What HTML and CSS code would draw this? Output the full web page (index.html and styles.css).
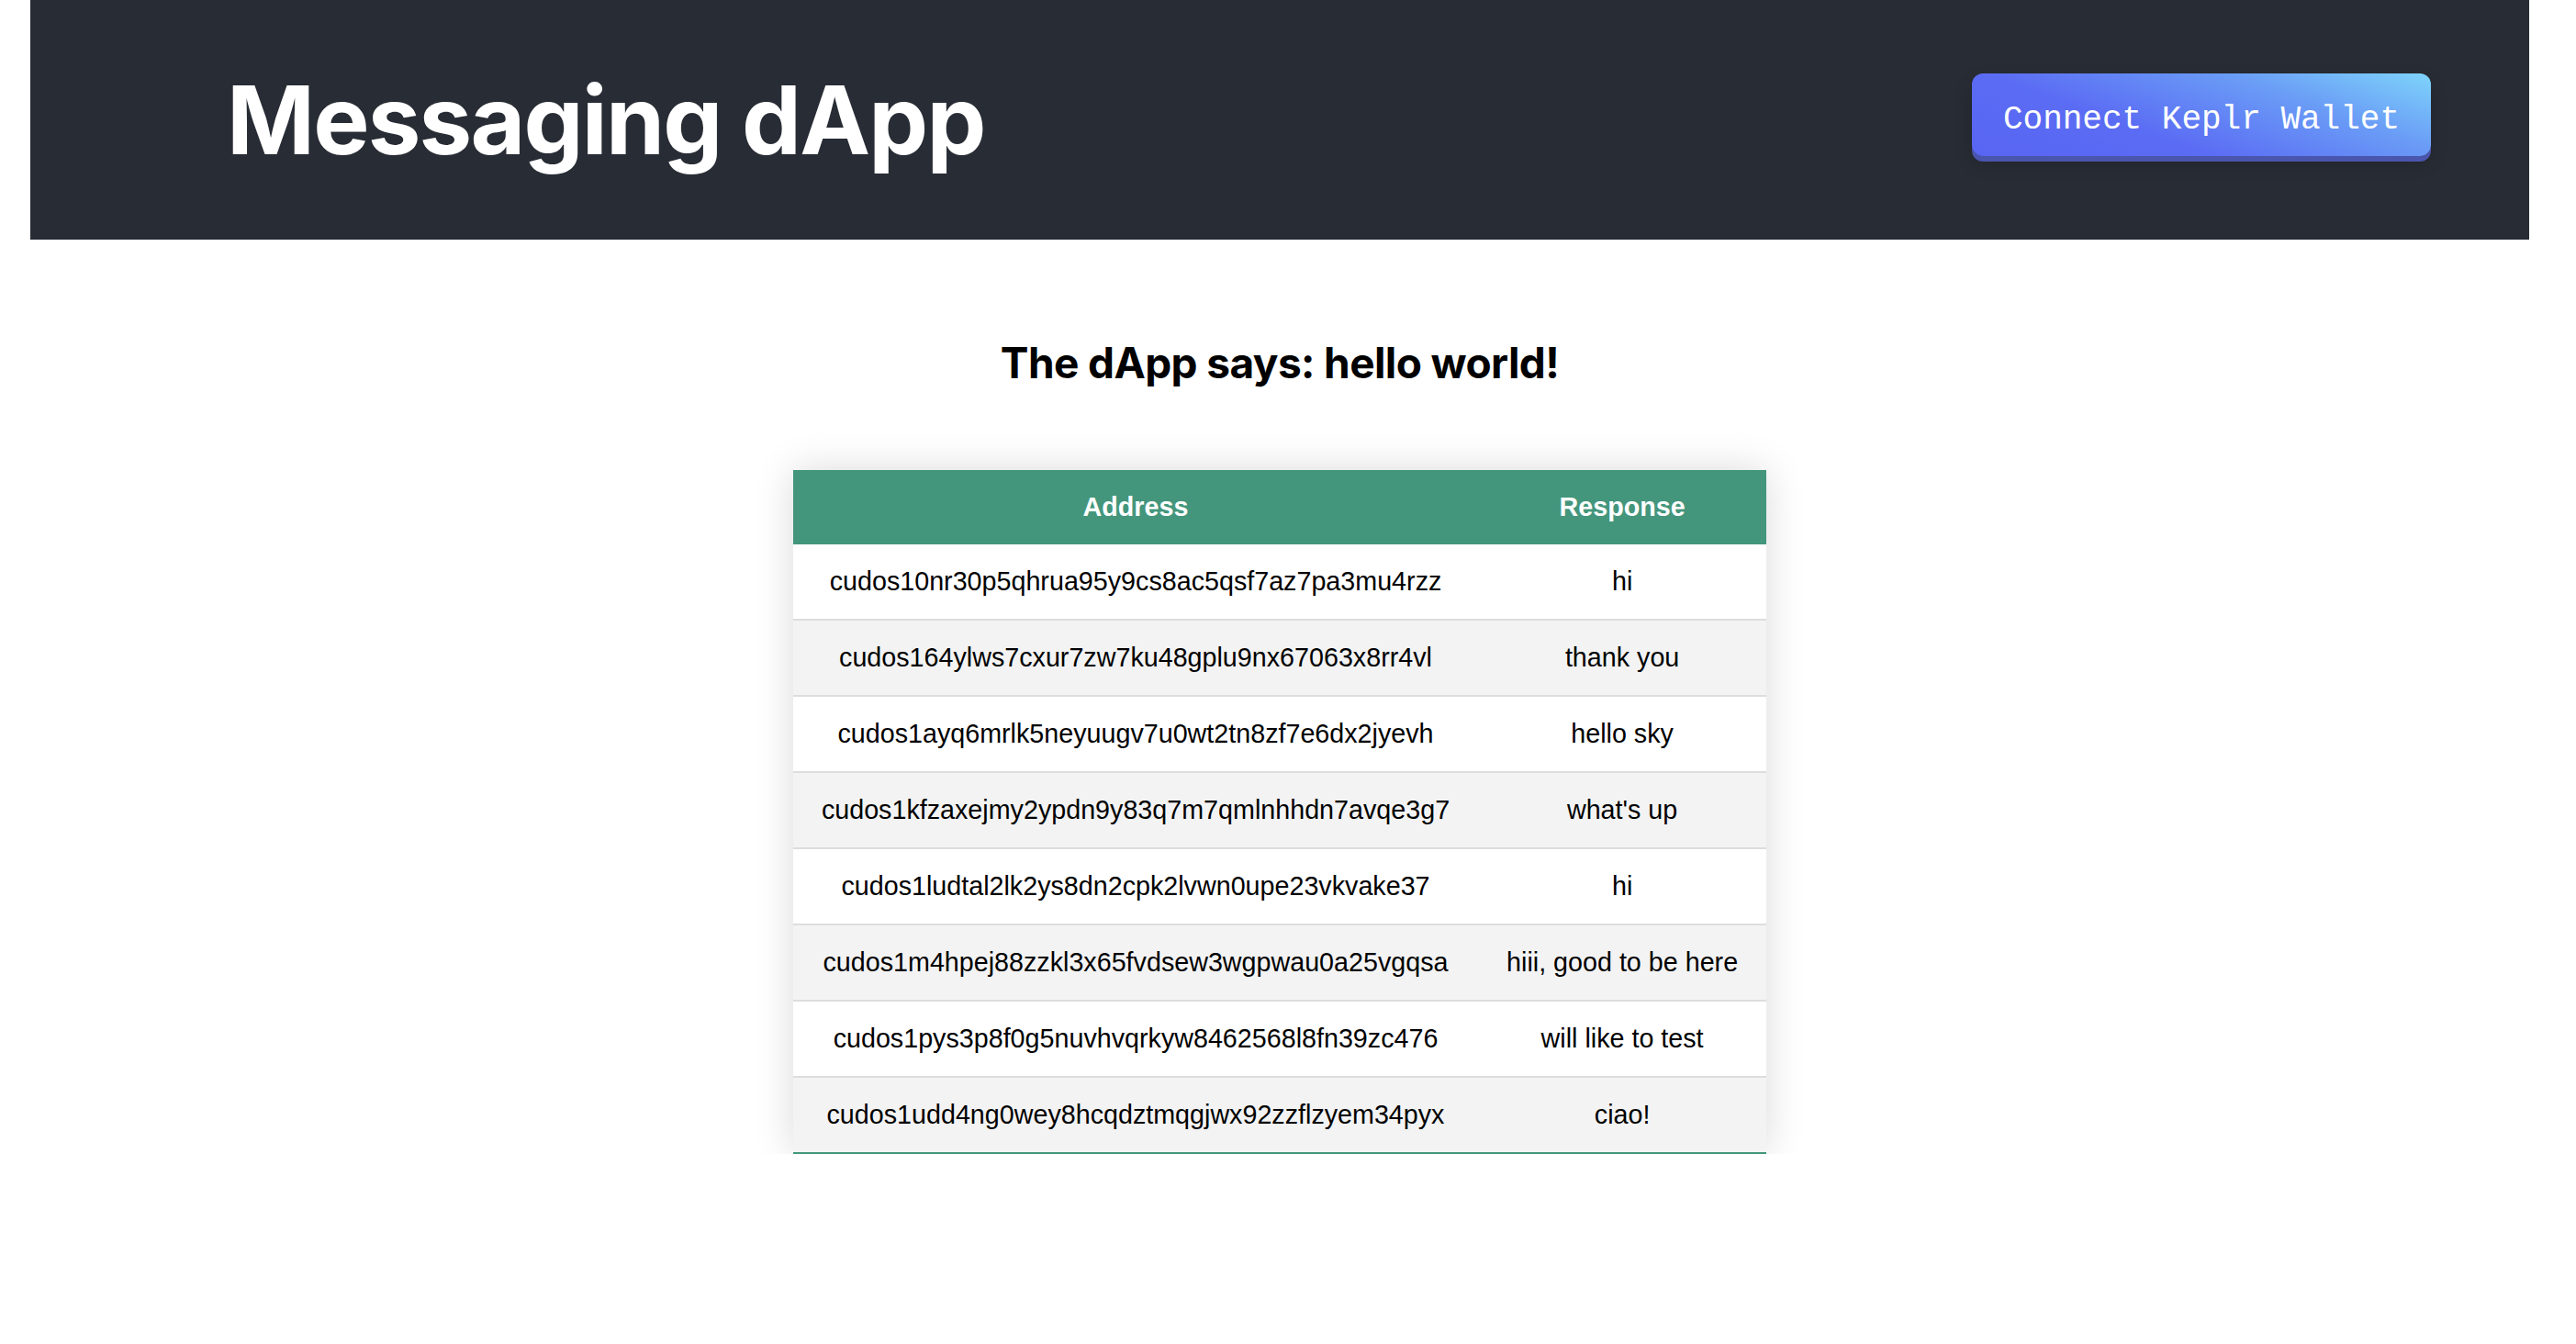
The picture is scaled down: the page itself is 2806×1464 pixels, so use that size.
FILE: index.html
```html
<!DOCTYPE html>
<html lang="en">
<head>
<meta charset="utf-8">
<title>Messaging dApp</title>
<link rel="stylesheet" href="styles.css">
</head>
<body>
<div class="page">
  <header class="app-header">
    <h1 class="app-title">Messaging dApp</h1>
    <button class="connect-btn">Connect Keplr Wallet</button>
  </header>
  <main class="content">
    <h2 class="says">The dApp says: hello world!</h2>
    <table class="styled-table">
      <thead>
        <tr><th>Address</th><th>Response</th></tr>
      </thead>
      <tbody>
        <tr><td>cudos10nr30p5qhrua95y9cs8ac5qsf7az7pa3mu4rzz</td><td>hi</td></tr>
        <tr><td>cudos164ylws7cxur7zw7ku48gplu9nx67063x8rr4vl</td><td>thank you</td></tr>
        <tr><td>cudos1ayq6mrlk5neyuugv7u0wt2tn8zf7e6dx2jyevh</td><td>hello sky</td></tr>
        <tr><td>cudos1kfzaxejmy2ypdn9y83q7m7qmlnhhdn7avqe3g7</td><td>what's up</td></tr>
        <tr><td>cudos1ludtal2lk2ys8dn2cpk2lvwn0upe23vkvake37</td><td>hi</td></tr>
        <tr><td>cudos1m4hpej88zzkl3x65fvdsew3wgpwau0a25vgqsa</td><td>hiii, good to be here</td></tr>
        <tr><td>cudos1pys3p8f0g5nuvhvqrkyw8462568l8fn39zc476</td><td>will like to test</td></tr>
        <tr><td>cudos1udd4ng0wey8hcqdztmqgjwx92zzflzyem34pyx</td><td>ciao!</td></tr>
      </tbody>
    </table>
  </main>
</div>
</body>
</html>
```
FILE: styles.css
```css
html, body {
  margin: 0;
  padding: 0;
  background: #ffffff;
}

.page {
  margin: 0 51px 0 33px;
}

.app-header {
  background: #282c34;
  height: 261px;
  box-sizing: border-box;
  padding: 0 107px 0 214px;
  display: flex;
  align-items: center;
  justify-content: space-between;
}

.app-title {
  margin: 0;
  font-family: Inter, "Noto Sans", sans-serif;
  font-weight: 700;
  font-size: 103px;
  line-height: 124px;
  letter-spacing: -1.8px;
  color: #ffffff;
}

.connect-btn {
  margin: 0 0 11px 0;
  width: 500px;
  height: 90px;
  padding: 11px 20px 0 20px;
  border: none;
  border-radius: 12px;
  background: linear-gradient(20deg, #5865f2 0%, #5b6cf4 35%, #6a9cf6 70%, #7ed4fb 100%);
  box-shadow: 0 6px 0 #4a55ad, 0 8px 18px rgba(0, 0, 0, 0.18);
  color: #ffffff;
  font-family: "Liberation Mono", "Courier New", monospace;
  font-size: 36px;
  line-height: 40px;
  text-align: center;
  cursor: pointer;
}

.content {
  display: flex;
  flex-direction: column;
  align-items: center;
}

.says {
  margin: 106px 0 88px 0;
  font-family: Inter, "Noto Sans", sans-serif;
  font-weight: 700;
  font-size: 46px;
  line-height: 57px;
  letter-spacing: -0.6px;
  color: #000000;
}

.styled-table {
  border-collapse: collapse;
  font-family: "Liberation Sans", Arial, sans-serif;
  font-size: 28.7px;
  box-shadow: 0 0 40px rgba(0, 0, 0, 0.15);
}

.styled-table th,
.styled-table td {
  padding: 24px 31px;
  line-height: 33px;
  text-align: center;
  white-space: nowrap;
}

.styled-table thead tr {
  background: #43967c;
  color: #ffffff;
}

.styled-table th {
  font-weight: 700;
}

.styled-table td {
  color: #000000;
}

.styled-table tbody tr {
  border-bottom: 2px solid #dddddd;
  background: #ffffff;
}

.styled-table tbody tr:nth-of-type(even) {
  background: #f3f3f3;
}

.styled-table tbody tr:last-of-type {
  border-bottom: 2px solid #43967c;
}
```
